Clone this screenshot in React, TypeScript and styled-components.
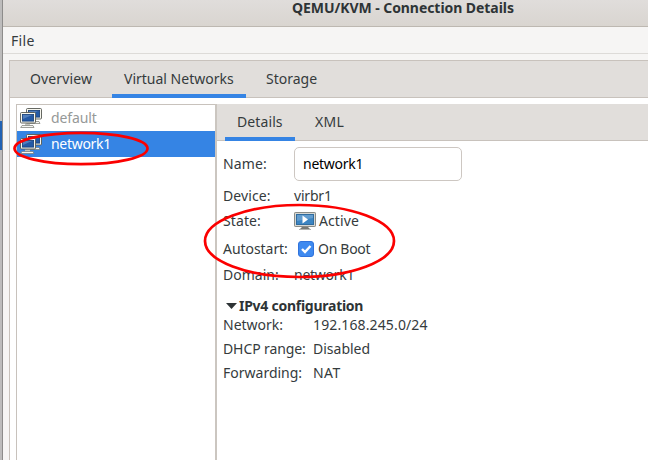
import React from "react";
import styled, { createGlobalStyle } from "styled-components";

const GlobalStyle = createGlobalStyle`
  * { box-sizing: border-box; }
  body { margin: 0; overflow: hidden; background: #b6b5b4; }
`;

const Desktop = styled.div`
  position: relative;
  display: flex;
  width: 648px;
  height: 460px;
  overflow: hidden;
  font-family: "Noto Sans", "Open Sans", sans-serif;
  font-size: 14px;
  line-height: 20px;
  color: #353b3d;
  white-space: nowrap;
`;

const Backdrop = styled.div`
  width: 3px;
  flex: none;
  padding-top: 121px;
  background: #bdbcbc;
  border-right: 1px solid #8d8c8b;
`;

const BackdropSelection = styled.div`
  height: 29px;
  background: #2263b4;
`;

const Window = styled.main`
  flex: 1;
  min-width: 0;
  display: flex;
  flex-direction: column;
  background: #f6f5f4;
`;

const TitleBar = styled.header`
  height: 27px;
  flex: none;
  padding: 0 0 0 289px;
  line-height: 16px;
  font-weight: 700;
  background: linear-gradient(#e0dddb, #d9d5d0);
  border-bottom: 1px solid #bdb8b1;
  color: #2e3436;
`;

const MenuBar = styled.nav`
  height: 27px;
  flex: none;
  padding: 4px 0 0 8px;
  border-bottom: 1px solid #dddbd8;
`;

const Notebook = styled.section`
  flex: 1;
  display: flex;
  flex-direction: column;
  margin: 6px 0 0 6px;
  background: #fff;
  border: 1px solid #c8c2bc;
  border-width: 1px 0 0 1px;
`;

const TabStrip = styled.div`
  display: flex;
  gap: 8px;
  flex: none;
  height: 37px;
  padding-left: 8px;
  background: #e1dedb;
  border-bottom: 1px solid #c8c2bc;
`;

const Tab = styled.div<{ $w: number; $active?: boolean }>`
  width: ${(p) => p.$w}px;
  height: 37px;
  padding: 8px 0 0 12px;
  border-bottom: ${(p) => (p.$active ? "4px solid #3584e4" : "0")};
`;

const Copy = styled.span<{ $ls?: number }>`
  letter-spacing: ${(p) => p.$ls ?? 0}px;
`;

const Panes = styled.div`
  flex: 1;
  display: flex;
  padding: 6px 0 0 6px;
`;

const NetworkList = styled.aside`
  width: 199px;
  flex: none;
  border: 1px solid #c8c2bc;
  border-width: 1px 0 0 1px;
`;

const NetworkRow = styled.div<{ $selected?: boolean }>`
  display: flex;
  height: 26px;
  padding: 3px 0 0 3px;
  gap: 8px;
  color: ${(p) => (p.$selected ? "#fff" : "#969998")};
  background: ${(p) => (p.$selected ? "#3584e4" : "#fff")};
  svg { flex: none; }
`;

const Separator = styled.div`
  width: 2px;
  flex: none;
  background: #cbc6c0;
`;

const DetailPane = styled.section`
  flex: 1;
  min-width: 0;
`;

const Field = styled.div<{ $h: number; $label?: number }>`
  display: grid;
  grid-template-columns: ${(p) => p.$label ?? 71}px 1fr;
  grid-template-rows: ${(p) => p.$h}px;
  align-items: center;
  height: ${(p) => p.$h}px;
  margin-left: 6px;
`;

const Value = styled.div<{ $gap?: number; $indent?: number }>`
  display: flex;
  align-items: center;
  gap: ${(p) => p.$gap ?? 0}px;
  padding-left: ${(p) => p.$indent ?? 0}px;
`;

const NameInput = styled.div`
  width: 168px;
  height: 34px;
  padding: 6px 8px;
  border: 1px solid #cdc7c2;
  border-radius: 5px;
  color: #000;
`;

const CheckBox = styled.span`
  display: grid;
  width: 16px;
  height: 16px;
  border: 1px solid #3173dc;
  border-radius: 3px;
  background: #3e8af0;
`;

const Expander = styled.div`
  display: flex;
  align-items: center;
  gap: 1px;
  height: 20px;
  margin: 7px 0 0 8px;
  font-weight: 700;
  color: #2e3436;
`;

const Marks = styled.svg`
  position: absolute;
  inset: 0;
  pointer-events: none;
`;

function Monitor() {
  return (
    <>
      <path d="M5 11.5h5v2H5z" fill="#c3c4bd" />
      <path d="M2 13.5h11l1 2H.7z" fill="#f7f7f3" stroke="#777872" strokeWidth=".7" />
      <rect x=".5" y=".5" width="15" height="10.5" rx="1" fill="#f7f7ef" stroke="#555750" strokeWidth=".9" />
      <rect x="2.4" y="2.4" width="11.2" height="6.7" fill="#2459a5" stroke="#173f78" strokeWidth=".8" />
      <path d="M3 3h9L3 7z" fill="#517fbd" />
    </>
  );
}

function ComputersIcon() {
  return (
    <svg width="23" height="20" viewBox="0 0 23 20">
      <g transform="translate(6 0)"><Monitor /></g>
      <g transform="translate(0 4)"><Monitor /></g>
    </svg>
  );
}

function RunningIcon() {
  return (
    <svg width="22" height="20" viewBox="0 0 22 20">
      <path d="M8 16h6l2 2H6z" fill="#777975" />
      <path d="M5 18.5h12" stroke="#b1b2ae" />
      <rect x=".5" y="1.5" width="21" height="14" rx=".7" fill="#d6d7d3" stroke="#8a8c87" />
      <rect x="2.5" y="3.5" width="17" height="10" fill="#3c85c2" stroke="#2f6c9f" />
      <path d="M3 4h16v3L3 10z" fill="#629cce" />
      <path d="M8.5 4.5v8l5.5-4z" fill="#fff" />
    </svg>
  );
}

export default function App() {
  return (
    <>
      <GlobalStyle />
      <Desktop>
        <Backdrop><BackdropSelection /></Backdrop>
        <Window>
          <TitleBar><Copy $ls={-0.06}>QEMU/KVM - Connection Details</Copy></TitleBar>
          <MenuBar><Copy $ls={0.3}>File</Copy></MenuBar>
          <Notebook>
            <TabStrip>
              <Tab $w={86}><Copy $ls={0.12}>Overview</Copy></Tab>
              <Tab $w={134} $active><Copy>Virtual Networks</Copy></Tab>
              <Tab $w={80}><Copy>Storage</Copy></Tab>
            </TabStrip>
            <Panes>
              <NetworkList>
                <NetworkRow><ComputersIcon /><Copy $ls={-0.12}>default</Copy></NetworkRow>
                <NetworkRow $selected><ComputersIcon /><Copy $ls={-0.3}>network1</Copy></NetworkRow>
              </NetworkList>
              <Separator />
              <DetailPane>
                <TabStrip>
                  <Tab $w={70} $active><Copy $ls={0.1}>Details</Copy></Tab>
                  <Tab $w={60}><Copy $ls={0.3}>XML</Copy></Tab>
                </TabStrip>
                <Field $h={46}><Copy $ls={0.1}>Name:</Copy><NameInput><Copy $ls={-0.25}>network1</Copy></NameInput></Field>
                <Field $h={18}><Copy $ls={0.1}>Device:</Copy><Value><Copy $ls={-0.2}>virbr1</Copy></Value></Field>
                <Field $h={32}><Copy $ls={0.1}>State:</Copy><Value $gap={3}><RunningIcon /><Copy $ls={0.1}>Active</Copy></Value></Field>
                <Field $h={24}>
                  <Copy $ls={-0.05}>Autostart:</Copy>
                  <Value $gap={4} $indent={4}>
                    <CheckBox>
                      <svg width="14" height="14" viewBox="0 0 14 14">
                        <path d="M3 7l3 3 5.5-6" fill="none" stroke="#fff" strokeWidth="2.4" />
                      </svg>
                    </CheckBox>
                    <Copy $ls={-0.3}>On Boot</Copy>
                  </Value>
                </Field>
                <Field $h={28}><Copy>Domain:</Copy><Value><Copy $ls={-0.25}>network1</Copy></Value></Field>
                <Expander>
                  <svg width="13" height="8" viewBox="0 0 13 8"><path d="M1 1h11L6.5 7z" fill="#2e3436" /></svg>
                  <Copy $ls={-0.26}>IPv4 configuration</Copy>
                </Expander>
                <Field $h={18} $label={90}><Copy>Network:</Copy><Copy $ls={0.13}>192.168.245.0/24</Copy></Field>
                <Field $h={30} $label={90}><Copy $ls={-0.1}>DHCP range:</Copy><Copy>Disabled</Copy></Field>
                <Field $h={18} $label={90}><Copy>Forwarding:</Copy><Copy $ls={0.4}>NAT</Copy></Field>
              </DetailPane>
            </Panes>
          </Notebook>
        </Window>
        <Marks width="648" height="460" viewBox="0 0 648 460" fill="none" stroke="#fb0000" strokeWidth="2.7">
          <ellipse cx="81" cy="148.5" rx="66.5" ry="15.7" />
          <ellipse cx="299.5" cy="241" rx="94.5" ry="36" />
        </Marks>
      </Desktop>
    </>
  );
}
